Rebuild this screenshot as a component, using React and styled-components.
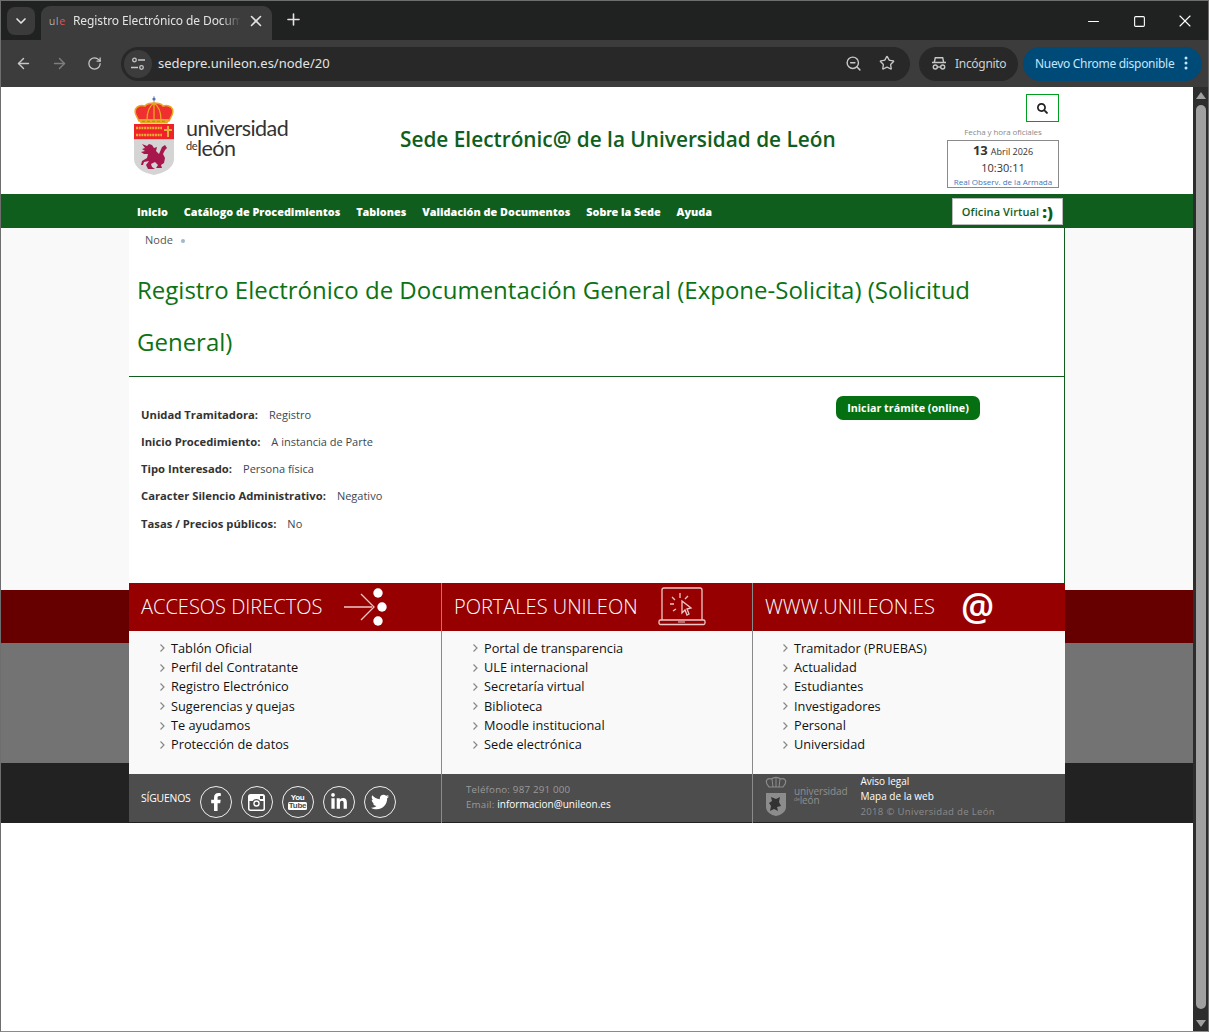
import React from "react";
import styled, { createGlobalStyle } from "styled-components";
import { ArrowLeft, ArrowRight, ChevronDown, Minus, Plus, RotateCw, Square, Star, X, ZoomOut } from "lucide-react";
import { FaFacebookF, FaLinkedinIn, FaSearch, FaTwitter } from "react-icons/fa";

const GlobalStyle = createGlobalStyle`
  html, body { margin: 0; padding: 0; background: #fff; overflow: hidden; }
  body { font-family: "Open Sans", "Noto Sans", sans-serif; }
  a { text-decoration: none; color: inherit; }
`;

const Win = styled.div`
  width: 1209px;
  height: 1032px;
  box-sizing: border-box;
  border: 1px solid #6e6e6e;
  border-bottom-color: #8a8a8a;
  display: flex;
  flex-direction: column;
  overflow: hidden;
`;

/* browser chrome */
const TabStrip = styled.div`
  height: 39px;
  background: #202221;
  display: flex;
  align-items: flex-end;
  color: #e3e3e3;
  flex: none;
`;

const TabMenu = styled.div`
  width: 28px;
  height: 28px;
  margin: 0 6px 5px 6px;
  border-radius: 8px;
  background: #3b3b3b;
  display: flex;
  align-items: center;
  justify-content: center;
`;

const Tab = styled.div`
  width: 231px;
  height: 34px;
  background: #3c3c3c;
  border-radius: 9px 9px 0 0;
  display: flex;
  align-items: center;
  box-sizing: border-box;
  padding: 0 6px 5px 8px;
  font: 12px "Noto Sans", sans-serif;
  letter-spacing: -.1px;
`;

const Favicon = styled.span`
  width: 16px;
  margin-right: 8px;
  font: 300 10.5px "Open Sans", sans-serif;
  color: #ddd;
  letter-spacing: .8px;
  b { color: #e25555; font-weight: 400; }
`;

const TabTitle = styled.span`
  width: 168px;
  margin-right: 6px;
  white-space: nowrap;
  overflow: hidden;
  -webkit-mask-image: linear-gradient(to right, #000 88%, transparent);
  mask-image: linear-gradient(to right, #000 88%, transparent);
`;

const NewTab = styled.div`
  margin: 0 auto 11px 12px;
  display: flex;
`;

const WinControls = styled.div`
  display: flex;
  align-items: center;
  margin-bottom: 9px;
  color: #fff;
`;

const WinButton = styled.div`
  width: 46px;
  display: flex;
  justify-content: center;
`;

const Toolbar = styled.div`
  height: 47px;
  flex: none;
  background: #3c3c3c;
  display: flex;
  align-items: center;
  color: #c7c7c7;
  box-sizing: border-box;
  padding-left: 14px;
`;

const NavIcon = styled.div`
  width: 36px;
  flex: none;
  display: flex;
  margin-top: -1px;
  color: ${(p) => (p.$off ? "#7e7e7e" : "#c7c7c7")};
`;

const Omnibox = styled.div`
  width: 789px;
  height: 34px;
  flex: none;
  margin-left: -2px;
  border-radius: 17px;
  background: #282828;
  display: flex;
  align-items: center;
  box-sizing: border-box;
  padding: 0 15px 0 3px;
  font: 13px "Noto Sans", sans-serif;
  color: #e3e3e3;
`;

const SiteIcon = styled.div`
  width: 28px;
  height: 28px;
  border-radius: 50%;
  background: #3c3c3c;
  display: flex;
  align-items: center;
  justify-content: center;
  margin-right: 6px;
`;

const Url = styled.span`
  flex: 1;
  margin-top: -1px;
`;

const OmniIcons = styled.div`
  display: flex;
  gap: 17px;
  color: #c7c7c7;
`;

const Pill = styled.div`
  height: 34px;
  flex: none;
  width: ${(p) => p.$w}px;
  box-sizing: border-box;
  margin-left: ${(p) => p.$ml}px;
  padding: 0 0 1px 12px;
  border-radius: 17px;
  background: ${(p) => p.$bg};
  display: flex;
  align-items: center;
  gap: ${(p) => p.$gap}px;
  font: 12px "Noto Sans", sans-serif;
  letter-spacing: -.3px;
  color: ${(p) => p.$color};
  white-space: nowrap;
`;

/* page */
const Viewport = styled.div`
  flex: 1;
  display: flex;
  min-height: 0;
`;

const Page = styled.div`
  flex: 1;
  min-width: 0;
  background: #fff;
  display: flex;
  flex-direction: column;
`;

const Scrollbar = styled.div`
  width: 15px;
  flex: none;
  background: #2d2d2d;
  display: flex;
  flex-direction: column;
  align-items: center;
  box-sizing: border-box;
  padding-top: 5px;
`;

const ScrollArrow = styled.div`
  width: 0;
  height: 0;
  border-left: 5px solid transparent;
  border-right: 5px solid transparent;
  border-${(p) => (p.$down ? "top" : "bottom")}: 7px solid #a0a0a0;
`;

const ScrollThumb = styled.div`
  width: 10px;
  height: 904px;
  margin: 6px 0 11px;
  border-radius: 5px;
  background: #a0a0a0;
`;

const Wrap = styled.div`
  width: 936px;
  margin-left: 128px;
`;

const Header = styled(Wrap)`
  height: 107px;
  display: flex;
  flex: none;
`;

const LogoBox = styled.div`
  width: 190px;
  display: flex;
  align-items: flex-start;
  padding: 8px 0 0 4px;
  box-sizing: border-box;
`;

const Wordmark = styled.div`
  margin: 24px 0 0 11px;
  font-family: "Lato", sans-serif;
  font-weight: 400;
  color: #333;
  letter-spacing: -.55px;
`;

const WordTop = styled.div`
  font-size: 21.5px;
  line-height: 19px;
`;

const WordBottom = styled.div`
  font-size: 21.5px;
  line-height: 15px;
  small { font-size: 11px; vertical-align: 6px; letter-spacing: -.5px; }
`;

const SiteTitle = styled.h2`
  margin: 37px 0 0 81px;
  width: 547px;
  font-size: 20.8px;
  line-height: 30px;
  font-weight: 600;
  color: #0f5e1e;
  white-space: nowrap;
`;

const Clock = styled.div`
  width: 112px;
  margin-top: 7px;
  display: flex;
  flex-direction: column;
  align-items: flex-end;
`;

const SearchBtn = styled.div`
  width: 31px;
  height: 26px;
  border: 1px solid #00a01e;
  display: flex;
  align-items: center;
  justify-content: center;
  color: #222;
  font-size: 11px;
`;

const ClockLabel = styled.div`
  width: 112px;
  text-align: center;
  font-size: 8px;
  line-height: 11px;
  margin-top: 4px;
  color: #8a8a8a;
  letter-spacing: -.1px;
`;

const ClockBox = styled.div`
  width: 112px;
  height: 48px;
  box-sizing: border-box;
  margin-top: 3px;
  border: 1px solid #8a8a8a;
  text-align: center;
  color: #333;
`;

const ClockDate = styled.div`
  font-size: 9px;
  line-height: 18px;
  b { font-size: 13px; font-weight: 700; margin-right: 3px; }
`;

const ClockTime = styled.div`
  font-size: 11px;
  line-height: 16px;
  margin-top: -1px;
`;

const ClockSource = styled.div`
  font-size: 8px;
  line-height: 11px;
  color: #3f78b8;
`;

const NavBar = styled.div`
  height: 34px;
  flex: none;
  background: #0f5e1e;
`;

const NavInner = styled(Wrap)`
  height: 34px;
  display: flex;
  align-items: center;
  padding-left: 8px;
  box-sizing: border-box;
  gap: 15.9px;
`;

const NavLink = styled.a`
  font-size: 10.85px;
  font-weight: 800;
  color: #fff;
  white-space: nowrap;
`;

const OficinaBtn = styled.a`
  margin: 1px 2px 0 auto;
  height: 27px;
  width: 111px;
  box-sizing: border-box;
  background: #fff;
  border: 1px solid #bbb;
  display: flex;
  align-items: center;
  justify-content: center;
  font-size: 11px;
  font-weight: 600;
  color: #0f5e1e;
  letter-spacing: .1px;
  span { font-size: 16.5px; font-weight: 800; margin-left: 3px; line-height: 20px; color: #0f5e1e; }
`;

const MainArea = styled.div`
  background: #f9f9f9;
  flex: none;
  padding-bottom: 7px;
`;

const Content = styled(Wrap)`
  height: 355px;
  background: #fff;
  border-right: 1px solid #0f5e1e;
  box-sizing: border-box;
  display: flex;
  flex-direction: column;
`;

const Crumbs = styled.div`
  padding: 4px 0 0 16px;
  font-size: 11px;
  line-height: 15px;
  color: #555;
  display: flex;
  align-items: center;
  &::after {
    content: "";
    width: 4px;
    height: 4px;
    border-radius: 50%;
    background: #9cb8c9;
    margin: 3px 0 0 8px;
  }
`;

const Title = styled.h1`
  margin: 17px 0 0;
  padding: 0 8px 8px;
  border-bottom: 1px solid #0f5e1e;
  font-size: 24px;
  line-height: 52px;
  font-weight: 400;
  color: #0a7315;
`;

const Details = styled.div`
  display: flex;
  align-items: flex-start;
  padding: 19px 0 0 12px;
`;

const RowList = styled.div`
  width: 695px;
  padding-top: 11px;
`;

const Row = styled.div`
  font-size: 11px;
  line-height: 15px;
  margin-bottom: 12.15px;
  color: #3a4752;
  b { font-size: 11.25px; color: #333; font-weight: 700; margin-right: 11px; }
`;

const StartBtn = styled.a`
  width: 144px;
  height: 24px;
  box-sizing: border-box;
  padding-bottom: 1px;
  border-radius: 7px;
  background: #047012;
  color: #fff;
  font-size: 10.75px;
  font-weight: 700;
  display: flex;
  align-items: center;
  justify-content: center;
`;

const FooterBand = styled.div`
  display: flow-root;
  height: 233px;
  flex: none;
  background: linear-gradient(#660000 0 53px, #737373 53px 173px, #222 173px);
`;

const FooterGrid = styled(Wrap)`
  display: grid;
  grid-template-columns: 312px 311px 313px;
  margin-top: -7px;
  height: 240px;
`;

const Column = styled.div`
  display: grid;
  grid-template-rows: 48px 143px 49px;
  border-left: ${(p) => (p.$first ? "none" : "1px solid #8a8a8a")};
`;

const ColHead = styled.div`
  background: #960000;
  display: flex;
  align-items: center;
  color: #fff;
  padding-left: 12px;
  font-size: 20px;
  font-weight: 300;
  white-space: nowrap;
`;

const HeadTitle = styled.span`
  width: ${(p) => p.$w}px;
  flex: none;
  margin-top: -1px;
`;

const AtSign = styled.span`
  font: 600 37px "Open Sans", sans-serif;
  line-height: 48px;
  margin: -3px 0 0 -1px;
  color: #fff;
`;

const LinkList = styled.ul`
  list-style: none;
  margin: 0;
  padding: 7.8px 0 0 ${(p) => p.$pad}px;
  background: #f9f9f9;
`;

const LinkItem = styled.li`
  font-size: 12.75px;
  line-height: 19.3px;
  color: #111;
  display: flex;
  align-items: center;
  white-space: nowrap;
  svg { margin-right: 6px; color: #888; }
`;

const ColFoot = styled.div`
  background: #4d4d4d;
  border-bottom: 1px solid #222;
  box-sizing: border-box;
  display: flex;
  color: #fff;
`;

const FollowRow = styled.div`
  display: flex;
  align-items: center;
  padding-left: 12px;
  font-size: 10.4px;
  letter-spacing: -.2px;
  height: 48px;
`;

const FollowLabel = styled.span`
  margin-right: 9px;
`;

const Social = styled.div`
  width: 32px;
  height: 32px;
  border: 1.5px solid #eee;
  border-radius: 50%;
  box-sizing: border-box;
  display: flex;
  align-items: center;
  justify-content: center;
  margin: 8px 9px 0 0;
  color: #fff;
  font-size: 18px;
  flex: none;
`;

const YouTubeMark = styled.div`
  font: bold 8px/8px "Liberation Sans", sans-serif;
  text-align: center;
  color: #fff;
  letter-spacing: -.3px;
  span {
    display: block;
    background: #fff;
    color: #4d4d4d;
    border-radius: 1.5px;
    padding: 0 1px;
  }
`;

const ContactBox = styled.div`
  padding: 8px 0 0 24px;
  font-size: 9.75px;
  line-height: 15px;
  color: #9a9a9a;
  letter-spacing: .2px;
  a { color: #fff; font-size: 10px; letter-spacing: 0; }
`;

const FootBrand = styled.div`
  display: flex;
  padding: 1px 0 0 11px;
`;

const BrandWord = styled.div`
  color: #8f8f8f;
  font-size: 10px;
  line-height: 8px;
  margin: 12px 0 0 6px;
  letter-spacing: -.1px;
  small { font-size: 5px; vertical-align: 3px; }
`;

const FootLinks = styled.div`
  margin-left: 13px;
  font-size: 10px;
  line-height: 15px;
  div:last-child { color: #8a8a8a; font-size: 9.6px; letter-spacing: .3px; }
`;

const TuneIcon = () => (
  <svg width="16" height="16" viewBox="0 0 16 16" fill="none" stroke="#c7c7c7" strokeWidth="1.3">
    <circle cx="4.5" cy="4" r="1.8" />
    <path d="M8 4h7M1 11.5h7" />
    <circle cx="11.5" cy="11.5" r="1.8" />
  </svg>
);

const IncognitoIcon = () => (
  <svg width="16" height="16" viewBox="0 0 16 16" fill="none" stroke="#c7c7c7" strokeWidth="1.4">
    <path d="M1 7.5h14M3.3 7.5l1-4.8h7.4l1 4.8" />
    <circle cx="4.3" cy="12" r="2" />
    <circle cx="11.7" cy="12" r="2" />
    <path d="M6.3 12h3.4" />
  </svg>
);

const Crest = () => (
  <svg width="42" height="80" viewBox="0 0 42 80">
    <path d="M21 1v7" stroke="#b9c0d8" strokeWidth="1.5" />
    <circle cx="21" cy="4" r="1.6" fill="#5a6ab0" />
    <path d="M3 20C0 13 6 9 12 11 15 7 27 7 30 11 36 9 42 13 39 20L36 26H6Z" fill="#f03030" stroke="#e8a820" strokeWidth="1.5" />
    <path d="M21 8C15 12 14 18 14 25M21 8C27 12 28 18 28 25M21 8V25" stroke="#e8a820" strokeWidth="1.3" fill="none" />
    <path d="M6 24h30l-1.5 4.5H7.5z" fill="#e8a820" />
    <path d="M9 26.3h24" stroke="#6aa84f" strokeWidth="1" strokeDasharray="3 2" />
    <rect x="1" y="29" width="40" height="15.5" fill="#ee2228" />
    <path d="M3 33h26M3 40h26" stroke="#e8b030" strokeWidth="2.6" strokeDasharray="2 .7" />
    <path d="M35 31v11M31 35h8" stroke="#e8b030" strokeWidth="2" />
    <path d="M1 44.5h40V64c0 9-10 14-20 16C11 78 1 73 1 64Z" fill="#d4d4d4" />
    <path d="M9 49l5 2 2-2 3 1 2 3 3-1-1 4 3 3 3-7 3-2 2 3-2 2-2 4 2 4-1 5-3 2 1 3h-6l2-3-3-3-4 2 1 3 3 2h-7l-2-4 3-4-5 1-1 3H8l1-4 5-3 1-4H11l-3-2 4-1-3-2 3-1z" fill="#a8174c" />
  </svg>
);

const FootCrest = () => (
  <svg width="24" height="44" viewBox="0 0 24 44" fill="none">
    <path d="M3 9C1 5 4 3 7 4c3-2 7-2 10 0 3-1 6 1 4 5l-2 3H5Z" stroke="#8c8c8c" strokeWidth="1.2" />
    <path d="M12 2v10M8 4l1 8M16 4l-1 8" stroke="#8c8c8c" />
    <path d="M2 18h20v14c0 5-5 8-10 9-5-1-10-4-10-9Z" fill="#8c8c8c" />
    <path d="M7 22l5 2 4-2-1 5 2 4-4 1 1 4-4-2-4 2 1-5-2-3 3-2z" fill="#333" />
  </svg>
);

const ArrowDots = () => (
  <svg width="46" height="42" viewBox="0 0 46 42" fill="none">
    <path d="M0 21h28M17 8l13 13-13 13" stroke="#f0c8c8" strokeWidth="1.3" />
    <circle cx="34" cy="7" r="4.7" fill="#fff" />
    <circle cx="38" cy="21" r="4.7" fill="#fff" />
    <circle cx="34" cy="35" r="4.7" fill="#fff" />
  </svg>
);

const LaptopClick = () => (
  <svg width="48" height="40" viewBox="0 0 48 40" fill="none" stroke="#f0c8c8" strokeWidth="1.3">
    <path d="M4 33V3a2 2 0 0 1 2-2h36a2 2 0 0 1 2 2v30" />
    <rect x="1" y="33" width="46" height="4.5" rx="1.5" />
    <path d="M20 35h7" strokeWidth="1" />
    <path d="M24 14l9 7-4 1 2 5-2 1-2-5-3 3z" />
    <path d="M22 11V6M17 13l-3-3M27 12l3-3M16 17h-4M18 22l-3 2" />
  </svg>
);

const InstagramMark = () => (
  <svg width="17" height="17" viewBox="0 0 17 17">
    <rect width="17" height="17" rx="2.5" fill="#fff" />
    <path d="M1.5 7h3.2a4.6 4.6 0 0 1 7.6 0h3.2v7.5a1 1 0 0 1-1 1h-12a1 1 0 0 1-1-1Z" fill="#4d4d4d" />
    <circle cx="8.5" cy="9.5" r="3.2" fill="#fff" />
    <circle cx="8.5" cy="9.5" r="1.8" fill="#4d4d4d" />
    <rect x="12" y="2" width="3" height="3" fill="#4d4d4d" />
  </svg>
);

const ChevronMark = () => (
  <svg width="5" height="8" viewBox="0 0 5 8" fill="none" stroke="currentColor" strokeWidth="1.2">
    <path d="M.5.5 4 4 .5 7.5" />
  </svg>
);

const columns = [
  ["Tablón Oficial", "Perfil del Contratante", "Registro Electrónico", "Sugerencias y quejas", "Te ayudamos", "Protección de datos"],
  ["Portal de transparencia", "ULE internacional", "Secretaría virtual", "Biblioteca", "Moodle institucional", "Sede electrónica"],
  ["Tramitador (PRUEBAS)", "Actualidad", "Estudiantes", "Investigadores", "Personal", "Universidad"],
];

const details = [
  ["Unidad Tramitadora:", "Registro"],
  ["Inicio Procedimiento:", "A instancia de Parte"],
  ["Tipo Interesado:", "Persona física"],
  ["Caracter Silencio Administrativo:", "Negativo"],
  ["Tasas / Precios públicos:", "No"],
];

const navLinks = ["Inicio", "Catálogo de Procedimientos", "Tablones", "Validación de Documentos", "Sobre la Sede", "Ayuda"];

const Links = ({ items, pad }) => (
  <LinkList $pad={pad}>
    {items.map((item) => (
      <LinkItem key={item}>
        <ChevronMark />
        {item}
      </LinkItem>
    ))}
  </LinkList>
);

export default function App() {
  return (
    <Win>
      <GlobalStyle />
      <TabStrip>
        <TabMenu><ChevronDown size={16} strokeWidth={2.5} /></TabMenu>
        <Tab>
          <Favicon>ul<b>e</b></Favicon>
          <TabTitle>Registro Electrónico de Documentación General</TabTitle>
          <X size={18} strokeWidth={1.6} absoluteStrokeWidth />
        </Tab>
        <NewTab><Plus size={19} strokeWidth={1.6} absoluteStrokeWidth /></NewTab>
        <WinControls>
          <WinButton><Minus size={17} strokeWidth={1.1} absoluteStrokeWidth /></WinButton>
          <WinButton><Square size={13} strokeWidth={1.1} absoluteStrokeWidth /></WinButton>
          <WinButton><X size={20} strokeWidth={1.1} absoluteStrokeWidth /></WinButton>
        </WinControls>
      </TabStrip>
      <Toolbar>
        <NavIcon><ArrowLeft size={17} /></NavIcon>
        <NavIcon $off><ArrowRight size={17} /></NavIcon>
        <NavIcon><RotateCw size={15} /></NavIcon>
        <Omnibox>
          <SiteIcon><TuneIcon /></SiteIcon>
          <Url>sedepre.unileon.es/node/20</Url>
          <OmniIcons>
            <ZoomOut size={17} />
            <Star size={16} />
          </OmniIcons>
        </Omnibox>
        <Pill $ml={9} $w={99} $bg="#282828" $color="#d0d0d0" $gap={8}><IncognitoIcon />Incógnito</Pill>
        <Pill $ml={5} $w={179} $bg="#004a77" $color="#c2e7ff" $gap={10}>
          Nuevo Chrome disponible
          <svg width="4" height="14" viewBox="0 0 4 14" fill="#c2e7ff">
            <circle cx="2" cy="2" r="1.5" /><circle cx="2" cy="7" r="1.5" /><circle cx="2" cy="12" r="1.5" />
          </svg>
        </Pill>
      </Toolbar>
      <Viewport>
        <Page>
          <Header>
            <LogoBox>
              <Crest />
              <Wordmark>
                <WordTop>universidad</WordTop>
                <WordBottom><small>de</small>león</WordBottom>
              </Wordmark>
            </LogoBox>
            <SiteTitle>Sede Electrónic@ de la Universidad de León</SiteTitle>
            <Clock>
              <SearchBtn><FaSearch /></SearchBtn>
              <ClockLabel>Fecha y hora oficiales</ClockLabel>
              <ClockBox>
                <ClockDate><b>13</b>Abril 2026</ClockDate>
                <ClockTime>10:30:11</ClockTime>
                <ClockSource>Real Observ. de la Armada</ClockSource>
              </ClockBox>
            </Clock>
          </Header>
          <NavBar>
            <NavInner>
              {navLinks.map((link) => <NavLink key={link}>{link}</NavLink>)}
              <OficinaBtn>Oficina Virtual <span>:)</span></OficinaBtn>
            </NavInner>
          </NavBar>
          <MainArea>
            <Content>
              <Crumbs>Node</Crumbs>
              <Title>Registro Electrónico de Documentación General (Expone-Solicita) (Solicitud General)</Title>
              <Details>
                <RowList>
                  {details.map(([label, value]) => (
                    <Row key={label}><b>{label}</b>{value}</Row>
                  ))}
                </RowList>
                <StartBtn>Iniciar trámite (online)</StartBtn>
              </Details>
            </Content>
          </MainArea>
          <FooterBand>
            <FooterGrid>
              <Column $first>
                <ColHead><HeadTitle $w={203}>ACCESOS DIRECTOS</HeadTitle><ArrowDots /></ColHead>
                <Links items={columns[0]} pad={31} />
                <ColFoot>
                  <FollowRow>
                    <FollowLabel>SÍGUENOS</FollowLabel>
                    <Social><FaFacebookF /></Social>
                    <Social><InstagramMark /></Social>
                    <Social><YouTubeMark>You<span>Tube</span></YouTubeMark></Social>
                    <Social><FaLinkedinIn /></Social>
                    <Social><FaTwitter /></Social>
                  </FollowRow>
                </ColFoot>
              </Column>
              <Column>
                <ColHead><HeadTitle $w={204}>PORTALES UNILEON</HeadTitle><LaptopClick /></ColHead>
                <Links items={columns[1]} pad={31} />
                <ColFoot>
                  <ContactBox>
                    Teléfono: 987 291 000<br />
                    Email: <a>informacion@unileon.es</a>
                  </ContactBox>
                </ColFoot>
              </Column>
              <Column>
                <ColHead><HeadTitle $w={197}>WWW.UNILEON.ES</HeadTitle><AtSign>@</AtSign></ColHead>
                <Links items={columns[2]} pad={30} />
                <ColFoot>
                  <FootBrand>
                    <FootCrest />
                    <BrandWord>universidad<br /><small>de</small>león</BrandWord>
                  </FootBrand>
                  <FootLinks>
                    <div>Aviso legal</div>
                    <div>Mapa de la web</div>
                    <div>2018 © Universidad de León</div>
                  </FootLinks>
                </ColFoot>
              </Column>
            </FooterGrid>
          </FooterBand>
        </Page>
        <Scrollbar>
          <ScrollArrow />
          <ScrollThumb />
          <ScrollArrow $down />
        </Scrollbar>
      </Viewport>
    </Win>
  );
}
